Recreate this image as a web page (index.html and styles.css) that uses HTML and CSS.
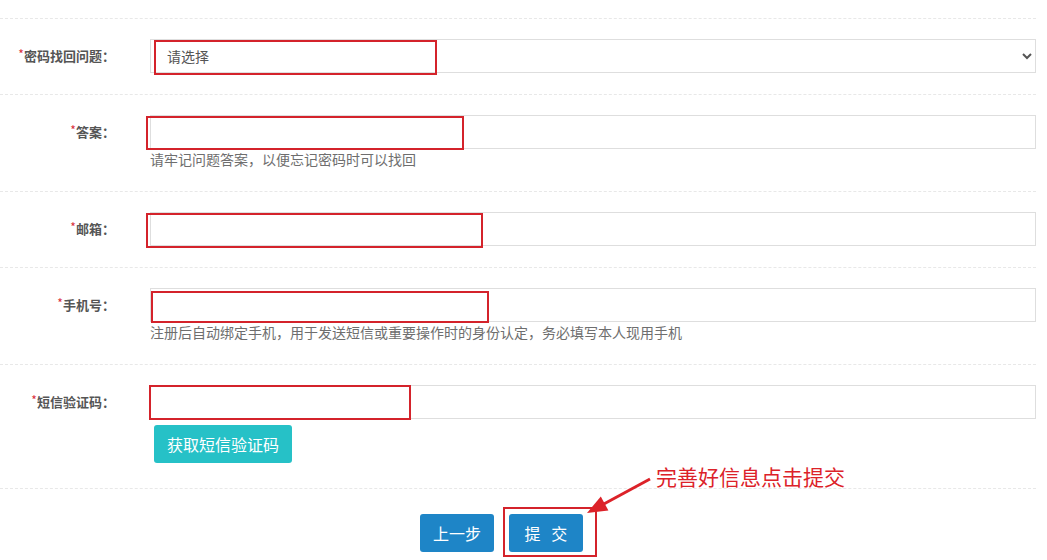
FILE: index.html
```html
<!DOCTYPE html>
<html lang="zh-CN">
<head>
<meta charset="utf-8">
<title>找回密码设置</title>
<link rel="stylesheet" href="styles.css">
</head>
<body>
<div class="form">
  <div class="row">
    <label class="label"><span class="req">*</span>密码找回问题<span class="colon">：</span></label>
    <div class="field">
      <select class="control select">
        <option>请选择</option>
      </select>
      <span class="mark mark-q"></span>
    </div>
  </div>
  <div class="row">
    <label class="label"><span class="req">*</span>答案<span class="colon">：</span></label>
    <div class="field">
      <input class="control" type="text">
      <span class="mark mark-a"></span>
      <div class="hint">请牢记问题答案，以便忘记密码时可以找回</div>
    </div>
  </div>
  <div class="row">
    <label class="label"><span class="req">*</span>邮箱<span class="colon">：</span></label>
    <div class="field">
      <input class="control" type="text">
      <span class="mark mark-e"></span>
    </div>
  </div>
  <div class="row">
    <label class="label"><span class="req">*</span>手机号<span class="colon">：</span></label>
    <div class="field">
      <input class="control" type="text">
      <span class="mark mark-p"></span>
      <div class="hint">注册后自动绑定手机，用于发送短信或重要操作时的身份认定，务必填写本人现用手机</div>
    </div>
  </div>
  <div class="row">
    <label class="label"><span class="req">*</span>短信验证码<span class="colon">：</span></label>
    <div class="field">
      <input class="control" type="text">
      <span class="mark mark-s"></span>
      <button class="btn btn-teal" type="button">获取短信验证码</button>
    </div>
  </div>
  <div class="actions">
    <button class="btn btn-blue" type="button">上一步</button>
    <div class="submit-wrap">
      <button class="btn btn-blue" type="button">提&nbsp;&nbsp;&nbsp;交</button>
      <span class="mark mark-submit"></span>
    </div>
    <div class="note">完善好信息点击提交</div>
    <svg class="arrow" width="80" height="50" viewBox="0 0 80 50">
      <line x1="70" y1="10" x2="22" y2="36" stroke="#dc2229" stroke-width="3"/>
      <polygon points="7,44 28.4,41.5 20.8,27.5" fill="#dc2229"/>
    </svg>
  </div>
</div>
</body>
</html>
```

FILE: styles.css
```css
html, body {
  margin: 0;
  padding: 0;
  background: #fff;
}
body {
  font-family: "Noto Sans CJK SC", "Liberation Sans", sans-serif;
  color: #555;
  min-height: 560px;
}
.form {
  width: 1036px;
  padding-top: 18px;
}
.row {
  display: grid;
  grid-template-columns: 120px 1fr;
  column-gap: 30px;
  align-items: start;
  padding: 20px 0 21px;
  border-top: 1px dashed #e8e8e8;
}
.label {
  height: 34px;
  line-height: 34px;
  text-align: right;
  font-size: 13px;
  font-weight: bold;
  color: #555;
  white-space: nowrap;
  padding-right: 5px;
}
.colon {
  font-family: "Noto Sans CJK JP", "Noto Sans CJK SC", sans-serif;
}
.req {
  color: #d9303a;
  font-weight: normal;
  font-size: 12px;
  vertical-align: top;
  position: relative;
  top: -2px;
}
.field {
  position: relative;
}
.control {
  display: block;
  box-sizing: border-box;
  width: 100%;
  height: 34px;
  margin: 0;
  border: 1px solid #dedede;
  border-radius: 0;
  background: #fff;
  font-family: inherit;
  font-size: 14px;
  color: #555;
  padding: 0 12px;
  outline: none;
}
.select {
  padding-left: 12px;
}
.hint {
  font-size: 14px;
  line-height: 21px;
  color: #6e6e6e;
  white-space: nowrap;
}
.mark {
  position: absolute;
  box-sizing: border-box;
  border: 2px solid #d4232b;
  pointer-events: none;
}
.mark-q { left: 4px; top: 1px; width: 283px; height: 35px; }
.mark-a { left: -4px; top: 1px; width: 318px; height: 34px; }
.mark-e { left: -4px; top: 1px; width: 337px; height: 35px; }
.mark-p { left: 1px; top: 3px; width: 338px; height: 32px; }
.mark-s { left: -1px; top: 0; width: 262px; height: 35px; }
.mark-submit { left: -6px; top: -7px; width: 94px; height: 50px; }
.btn {
  font-family: inherit;
  border: none;
  border-radius: 3px;
  color: #fff;
  font-size: 16px;
  height: 38px;
  padding: 0 13px;
  cursor: pointer;
}
.btn-teal {
  display: block;
  margin: 6px 0 4px 4px;
  background: #26c1c7;
  width: 138px;
}
.btn-blue {
  display: block;
  background: #1e85c7;
  width: 74px;
  padding: 0;
}
.actions {
  position: relative;
  display: flex;
  align-items: flex-start;
  gap: 15px;
  padding: 25px 0 0 420px;
  border-top: 1px dashed #e8e8e8;
}
.submit-wrap {
  position: relative;
}
.note {
  position: absolute;
  left: 656px;
  top: -25px;
  font-size: 21px;
  line-height: 24px;
  color: #dc2229;
  white-space: nowrap;
}
.arrow {
  position: absolute;
  left: 580px;
  top: -20px;
}
```
